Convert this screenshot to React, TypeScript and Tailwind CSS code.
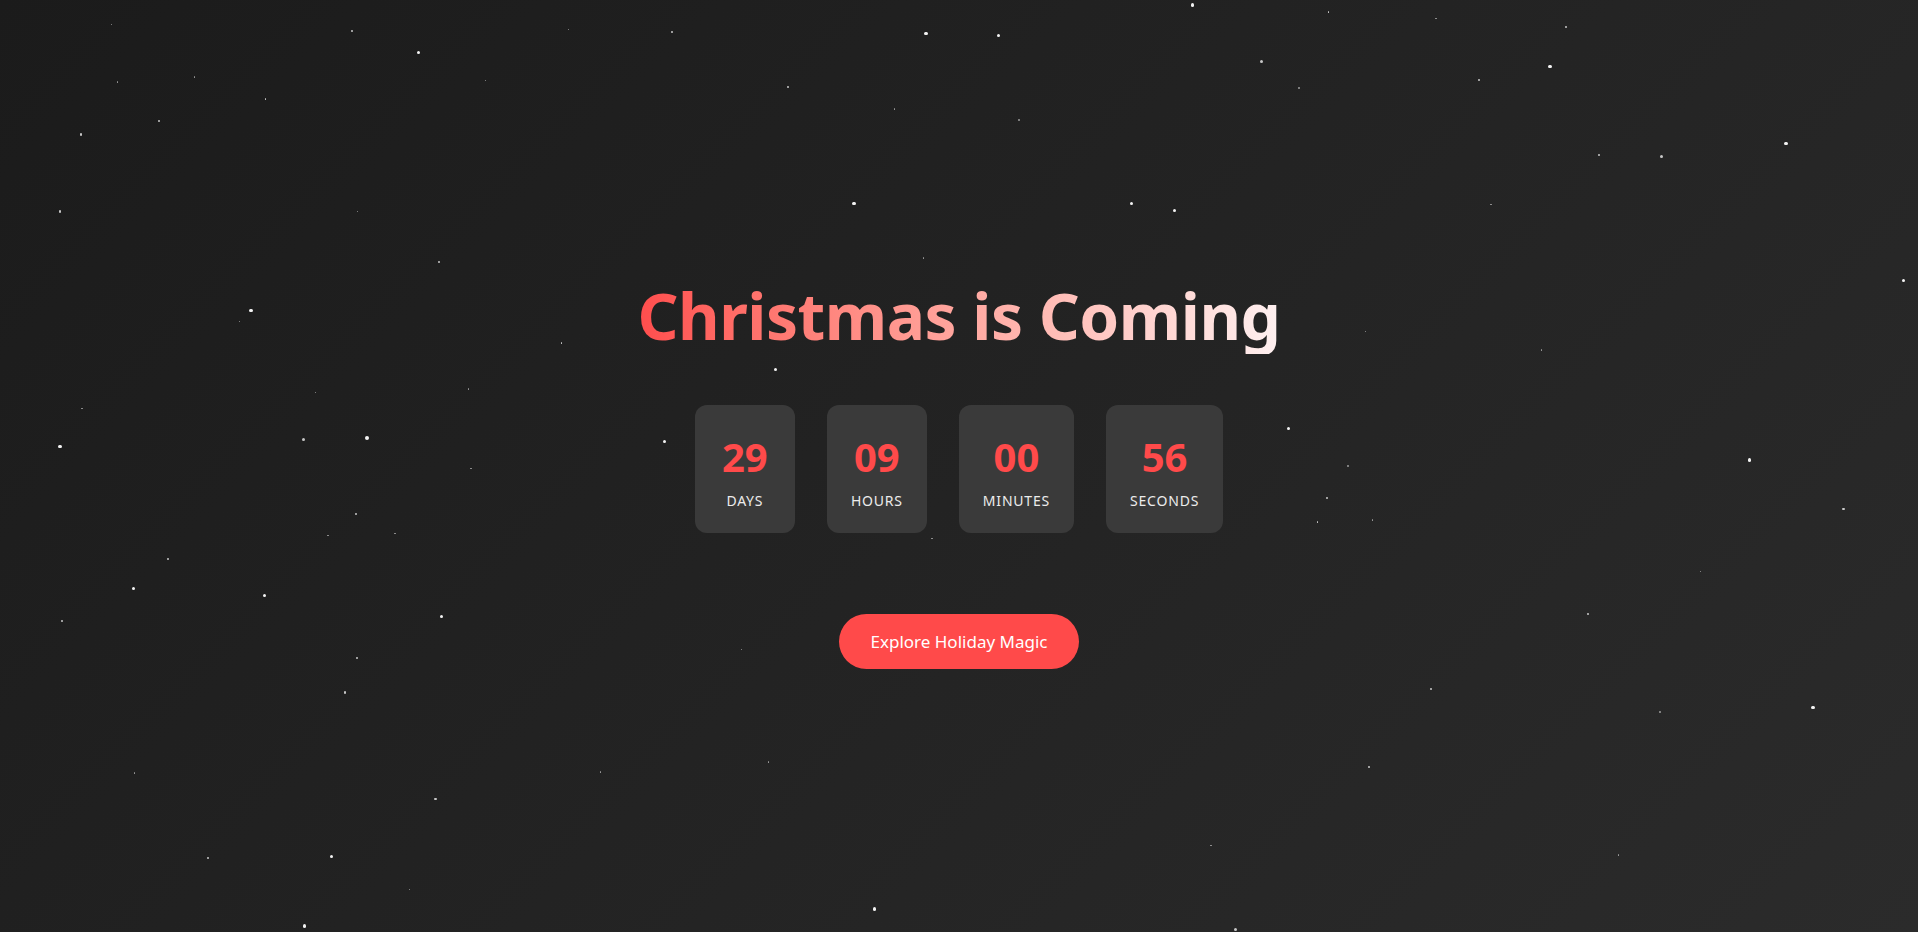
import React from "react";

// star positions measured on the 1568px preview, scaled up to 1918
const SCALE = 1918 / 1568;
const stars: [number, number, number][] = [
  [91, 20, 1], [288, 25, 1.5], [342, 43, 2.5], [465, 24, 1], [549, 26, 1.5], [757, 27, 2.5], [816, 29, 2.5],
  [975, 4, 2.5], [1086, 10, 1.5], [1174, 15, 1], [1280, 22, 2], [1031, 50, 2], [1267, 54, 2.5], [96, 67, 1],
  [159, 63, 1], [217, 81, 1.5], [130, 99, 1.5], [66, 110, 2], [397, 66, 1], [644, 71, 1.5], [731, 89, 1],
  [833, 98, 1], [1062, 72, 1], [1209, 65, 1.5], [1460, 117, 2.5], [1307, 127, 1.5], [1358, 128, 2],
  [49, 173, 2], [292, 173, 1], [698, 166, 2.5], [925, 166, 2.5], [960, 172, 2.5], [1219, 167, 1],
  [359, 214, 1.5], [755, 211, 1], [1556, 229, 2.5], [205, 254, 2.5], [196, 263, 1], [459, 280, 1.5],
  [634, 302, 2.5], [1116, 271, 1], [1260, 286, 1], [258, 321, 1], [383, 318, 1], [67, 334, 1],
  [49, 365, 2.5], [248, 359, 2], [300, 358, 2.5], [543, 361, 2.5], [1053, 350, 2.5], [1102, 381, 1],
  [1430, 376, 2.5], [385, 383, 1], [291, 420, 2], [1085, 407, 1.5], [1507, 416, 2], [268, 438, 1],
  [323, 436, 1], [1077, 427, 1.5], [1122, 425, 1], [762, 440, 1], [137, 457, 1.5], [109, 481, 2.5],
  [216, 487, 2.5], [1390, 467, 1], [51, 508, 1.5], [361, 504, 2.5], [1298, 502, 1.5], [292, 538, 1.5],
  [606, 531, 1], [282, 566, 2], [1170, 563, 1.5], [1482, 578, 2.5], [1357, 582, 1], [110, 632, 1],
  [491, 631, 1], [628, 623, 1], [1119, 627, 1.5], [356, 653, 2], [170, 701, 1.5], [271, 700, 2.5],
  [990, 691, 1], [1323, 699, 1], [335, 727, 1], [249, 757, 2.5], [715, 743, 2.5], [1010, 760, 2],
];

const units = [
  { value: "29", label: "Days" },
  { value: "09", label: "Hours" },
  { value: "00", label: "Minutes" },
  { value: "56", label: "Seconds" },
];

const App = () => {
  return (
    <div
      className="relative flex h-screen w-full flex-col items-center justify-center overflow-hidden bg-linear-135 from-[#1b1b1b] to-[#2b2b2b] pt-[15px]"
      style={{ fontFamily: '"Noto Sans", "Open Sans", sans-serif' }}
    >
      {stars.map(([x, y, s], i) => (
        <div
          key={i}
          className="absolute rounded-full bg-white"
          style={{
            left: x * SCALE - s * 0.6,
            top: y * SCALE - s * 0.6,
            width: s * 1.3,
            height: s * 1.3,
            opacity: s > 2 ? 0.95 : s > 1.2 ? 0.75 : 0.55,
          }}
        />
      ))}

      <div className="relative flex flex-col items-center">
        <h1 className="bg-linear-to-r from-[#ff4d4d] to-[#fdf0f0] bg-clip-text text-[64px] font-bold leading-[1.2] tracking-[-0.5px] text-transparent">
          Christmas is Coming
        </h1>

        <div className="mt-[51px] flex gap-8">
          {units.map((u) => (
            <div
              key={u.label}
              className="flex min-w-[100px] flex-col items-center rounded-xl bg-[#3a3a3a] px-6 pb-[22px] pt-[28px]"
            >
              <span className="text-[40px] font-bold leading-[48px] text-[#ff4a4a]">{u.value}</span>
              <span className="mt-[10px] text-[14px] uppercase leading-5 tracking-[0.8px] text-[#ececec]">
                {u.label}
              </span>
            </div>
          ))}
        </div>

        <button className="mt-[81px] h-[55px] rounded-full bg-[#ff4a4a] px-[32px] text-[17px] text-white">
          Explore Holiday Magic
        </button>
      </div>
    </div>
  );
};

export default App;
